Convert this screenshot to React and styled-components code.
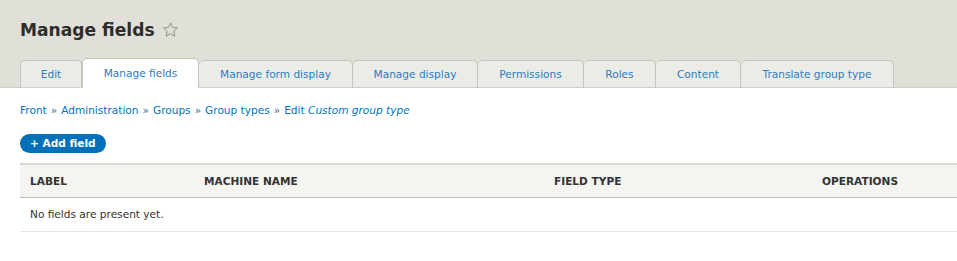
import styled, { createGlobalStyle } from "styled-components"

const GlobalStyle = createGlobalStyle`
    html, body {
        margin: 0;
        padding: 0;
        background: #fff;
        overflow: hidden;
    }
    body {
        font-family: "DejaVu Sans", "Liberation Sans", sans-serif;
        font-size: 10.57px;
        line-height: 16px;
        color: #333;
    }
`

const tabs = [
    { label: "Edit", width: 62 },
    { label: "Manage fields", width: 117, active: true },
    { label: "Manage form display", width: 154 },
    { label: "Manage display", width: 125 },
    { label: "Permissions", width: 106 },
    { label: "Roles", width: 72 },
    { label: "Content", width: 85 },
    { label: "Translate group type", width: 153 },
]

const crumbs = ["Front", "Administration", "Groups", "Group types"]

const columns = [
    { label: "Label", width: 174 },
    { label: "Machine name", width: 350 },
    { label: "Field type", width: 268 },
    { label: "Operations", width: 260 },
]

const StarIcon = () => (
    <svg width="19" height="18" viewBox="0 0 24 24" fill="none">
        <path
            d="M12 2.6l2.8 6 6.5.7-4.85 4.45 1.35 6.45L12 16.95 6.2 20.2l1.35-6.45L2.7 9.3l6.5-.7z"
            stroke="#8e8e88"
            strokeWidth="1.3"
            strokeLinejoin="round"
        />
    </svg>
)

const App = () => {
    return (
        <>
            <GlobalStyle />
            <Header>
                <TitleRow>
                    <Title>Manage fields</Title>
                    <StarIcon />
                </TitleRow>
                <Tabs>
                    {tabs.map((tab) => (
                        <Tab key={tab.label} $active={tab.active} $width={tab.width}>
                            {tab.label}
                        </Tab>
                    ))}
                </Tabs>
            </Header>
            <Content>
                <Breadcrumb>
                    {crumbs.map((c) => (
                        <span key={c}>
                            <a href="#">{c}</a>
                            <Sep>»</Sep>
                        </span>
                    ))}
                    <a href="#">
                        Edit <em>Custom group type</em>
                    </a>
                </Breadcrumb>
                <AddButton>+ Add field</AddButton>
                <TableWrap>
                    <Table>
                        <colgroup>
                            {columns.map((col) => (
                                <col key={col.label} style={{ width: col.width }} />
                            ))}
                        </colgroup>
                        <thead>
                            <tr>
                                {columns.map((col) => (
                                    <Th key={col.label}>{col.label}</Th>
                                ))}
                            </tr>
                        </thead>
                        <tbody>
                            <tr>
                                <Td colSpan={4}>No fields are present yet.</Td>
                            </tr>
                        </tbody>
                    </Table>
                </TableWrap>
            </Content>
        </>
    )
}

export default App

const Header = styled.div`
    background-color: #e0e0d8;
    padding: 19px 20px 0;
    border-bottom: 1px solid #cfcfc9;
`

const TitleRow = styled.div`
    display: flex;
    align-items: center;
    gap: 6px;
    height: 22px;
`

const Title = styled.h1`
    margin: 0;
    font-size: 17.1px;
    line-height: 22px;
    font-weight: bold;
    color: #2d2d2d;
`

const Tabs = styled.div`
    display: flex;
    align-items: flex-end;
    margin-top: 17px;
    margin-bottom: -1px;
`

const Tab = styled.a`
    display: block;
    box-sizing: border-box;
    width: ${(p) => p.$width}px;
    text-align: center;
    height: ${(p) => (p.$active ? "30px" : "28px")};
    line-height: ${(p) => (p.$active ? "29px" : "27px")};
    background-color: ${(p) => (p.$active ? "#fff" : "#ecece7")};
    border: 1px solid #c4c4be;
    border-bottom: ${(p) => (p.$active ? "none" : "1px solid #cfcfc9")};
    border-left-width: ${(p) => (p.$active ? "1px" : "0")};
    border-radius: 5px 5px 0 0;
    color: #2a7dc2;
    text-decoration: none;
    white-space: nowrap;
    position: relative;
    z-index: ${(p) => (p.$active ? 1 : 0)};

    &:first-child {
        border-left-width: 1px;
    }
`

const Content = styled.div`
    padding: 14px 0 0 20px;
`

const Breadcrumb = styled.div`
    line-height: 16px;

    a {
        color: #0074bd;
        text-decoration: none;
    }
`

const Sep = styled.span`
    color: #3d6f99;
    margin: 0 4px;
`

const AddButton = styled.button`
    display: block;
    margin-top: 16px;
    padding: 1px 10px 2px;
    border: none;
    border-radius: 20px;
    background-color: #0071b8;
    color: #fff;
    font-family: inherit;
    font-size: 10.57px;
    font-weight: bold;
    line-height: 16px;
`

const TableWrap = styled.div`
    margin-top: 10px;
    overflow: hidden;
`

const Table = styled.table`
    width: 1052px;
    table-layout: fixed;
    border-collapse: collapse;
    border-top: 2px solid #d9d9d3;
`

const Th = styled.th`
    text-align: left;
    padding: 8px 10px;
    background-color: #f4f4f1;
    border-bottom: 1px solid #bfbfba;
    text-transform: uppercase;
    font-weight: bold;
    color: #333;
`

const Td = styled.td`
    padding: 8px 10px 9px;
    border-bottom: 1px solid #e6e4df;
`
